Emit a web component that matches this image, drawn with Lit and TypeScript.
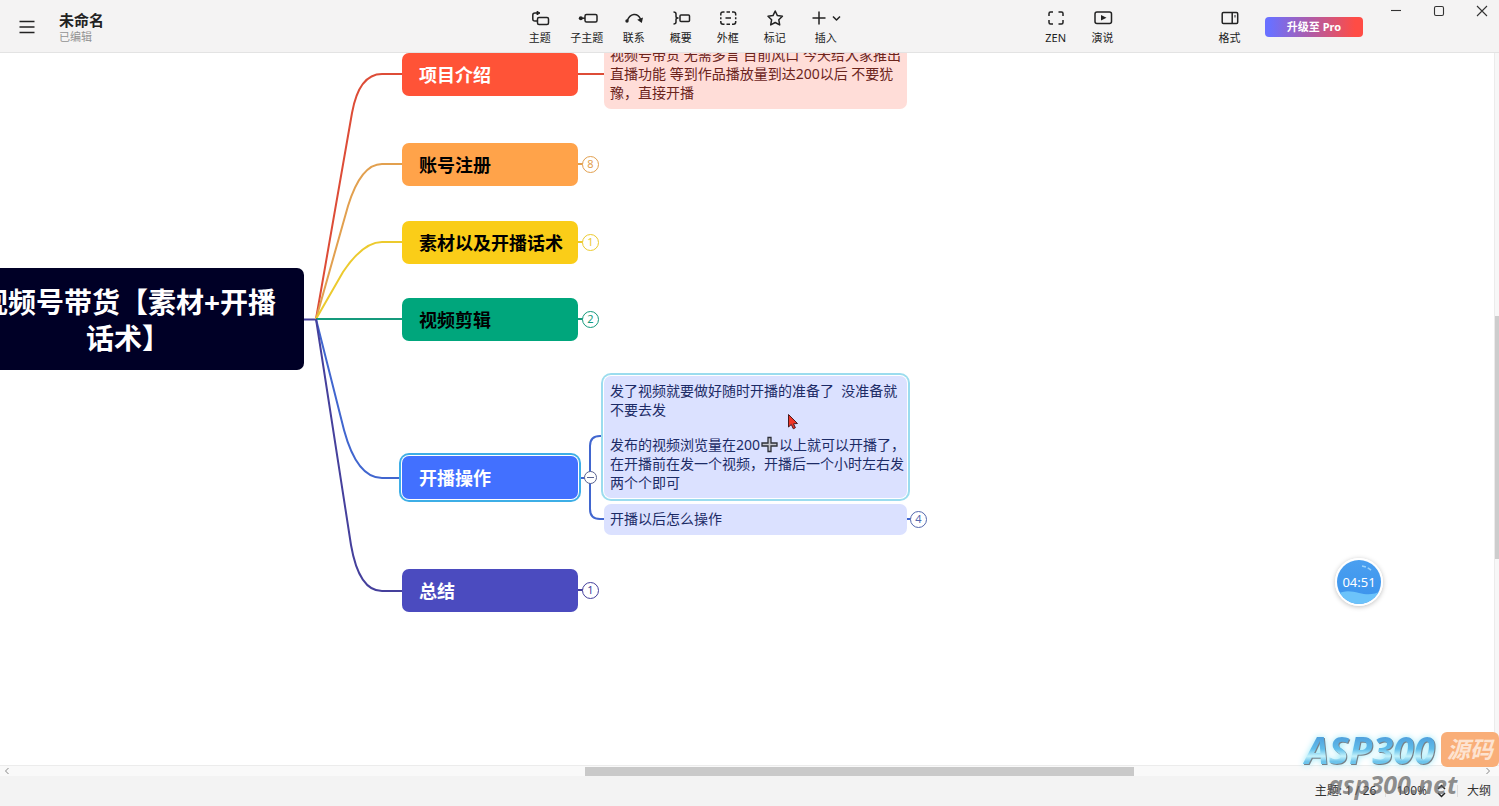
import { LitElement, html, svg, css, nothing } from "lit";
import { customElement, property, state } from "lit/decorators.js";

interface Topic {
  title: string;
  y: number;
  fill: string;
  line: string;
  ink: string;
  count?: number;
  selected?: boolean;
  branch: string;
}

/* Canvas coordinates: origin at the top left corner of the visible sheet. */
const TOPICS: Topic[] = [
  { title: "项目介绍", y: 0, fill: "#ff5337", line: "#dd4c37", ink: "#fff", branch: "M316 266L352 60Q359 21 382 21H404" },
  { title: "账号注册", y: 90, fill: "#ffa34a", line: "#e2a04f", ink: "#000", count: 8, branch: "M316 266L348 153Q361 111 382 111H404" },
  { title: "素材以及开播话术", y: 168, fill: "#facd18", line: "#ecca2e", ink: "#000", count: 1, branch: "M316 266L343 219Q363 189 382 189H404" },
  { title: "视频剪辑", y: 245, fill: "#00a67c", line: "#159a7c", ink: "#000", count: 2, branch: "M316 266H404" },
  { title: "开播操作", y: 403, fill: "#4270ff", line: "#4166cf", ink: "#fff", selected: true, branch: "M316 266L344 377Q357 425 382 425H404" },
  { title: "总结", y: 516, fill: "#4b4bbf", line: "#45409c", ink: "#fff", count: 1, branch: "M316 266L351 492Q359 538 382 538H404" },
];

const ICONS: Record<string, unknown> = {
  topic: svg`<rect x="6.500" y="8.500" width="11" height="7" rx="1.500"/><path d="M6 12H4Q1.800 12 1.800 10V6Q1.800 4 4 4H6.500"/><path d="M6 2.300L9 4L6 5.800Z" fill="currentColor" stroke-width="1"/>`,
  sub: svg`<rect x="7" y="5.500" width="12" height="7.500" rx="1.500"/><path d="M2 9.200H7"/><circle cx="2.800" cy="9.200" r="2" fill="currentColor" stroke="none"/>`,
  link: svg`<path d="M2.200 12C5 3.800 12.500 3.500 15.500 10"/><circle cx="2" cy="12" r="1.700" fill="currentColor" stroke="none"/><path d="M12.200 10.800L18 8.500L16.800 14Z" fill="currentColor" stroke="none"/>`,
  summary: svg`<path d="M1.500 3Q4 3 4 5V7.500Q4 9 6 9Q4 9 4 10.500V13Q4 15 1.500 15"/><rect x="8" y="6" width="9.500" height="6.500" rx="1"/>`,
  frame: svg`<path d="M5.500 3H4Q1.800 3 1.800 5.200V6.500M1.800 8.200V10.200M1.800 12V13Q1.800 15.200 4 15.200H5.500M7.500 3H11M7.500 15.200H11M13 3H14.500Q16.700 3 16.700 5.200V6.500M16.700 8.200V10.200M16.700 12V13Q16.700 15.200 14.500 15.200H13M6.500 9.100H12"/>`,
  star: svg`<path d="M9.200 2L11.400 6.600L16.400 7.300L12.800 10.800L13.700 15.900L9.200 13.500L4.700 15.900L5.600 10.800L2 7.300L7 6.600Z"/>`,
  zen: svg`<path d="M6 3H3.500Q2 3 2 4.500V7M2 11V13.500Q2 15 3.500 15H6M11.500 3H14.500Q16 3 16 4.500V7M16 11V13.500Q16 15 14.500 15H11.500"/>`,
  play: svg`<rect x="1" y="3" width="16.500" height="11.500" rx="2"/><path d="M7 6L12.500 8.800L7 11.500Z" fill="currentColor" stroke="none"/>`,
  format: svg`<rect x="1.200" y="3.500" width="15.500" height="11" rx="1.200"/><path d="M11.200 3.500V14.500"/><path d="M14 6V8.500" stroke-width="1"/>`,
};

const icon = (name: string) => html`<svg class="icon" viewBox="0 0 18 18" aria-hidden="true">${ICONS[name]}</svg>`;

@customElement("tool-button")
class ToolButton extends LitElement {
  @property() name = "";
  @property() label = "";

  static styles = css`
    :host { display: block; width: 47px; }
    button {
      display: flex; flex-direction: column; align-items: center; gap: 2px;
      width: 100%; padding: 0; border: 0; background: none; color: #222;
      font: 11px/18px "Noto Sans", "Noto Sans CJK SC", sans-serif;
      white-space: nowrap; cursor: pointer;
    }
    .icon { width: 18px; height: 18px; overflow: visible; fill: none; stroke: currentColor; stroke-width: 1.5; stroke-linejoin: round; }
    .wide { width: 30px; }
  `;

  render() {
    return html`<button type="button">
      ${this.name === "insert"
        ? html`<svg class="icon wide" viewBox="0 0 30 18" aria-hidden="true"><path d="M8 2.500V15.500M1.500 9H14.500M22 7.500L25.500 11L29 7.500"/></svg>`
        : icon(this.name)}
      <span>${this.label}</span>
    </button>`;
  }
}

@customElement("app-toolbar")
class AppToolbar extends LitElement {
  static styles = css`
    :host {
      display: flex; align-items: flex-start; box-sizing: border-box; height: 53px;
      background: #f4f3f3; border-bottom: 1px solid #e3e3e3;
      font-family: "Noto Sans", "Noto Sans CJK SC", sans-serif; color: #222;
    }
    button { padding: 0; border: 0; background: none; color: inherit; cursor: pointer; }
    .file { flex: 517 0 0; display: flex; min-width: 120px; }
    .menu { display: flex; width: 20px; height: 20px; margin: 17px 22px 0 17px; align-items: center; justify-content: center; }
    .menu svg { width: 16px; height: 14px; stroke: #222; stroke-width: 1.5; }
    .names { padding-top: 11px; white-space: nowrap; }
    h1 { margin: 0; font-size: 15px; line-height: 18px; font-weight: 700; }
    p { margin: 0; font-size: 11px; line-height: 16px; color: #929292; }
    .tools { display: flex; padding-top: 9px; }
    .last { margin-left: 4px; }
    .gap-a { flex: 183 0 0; }
    .gap-b { flex: 80 0 0; }
    .pro {
      width: 98px; height: 20px; margin: 17px 18px 0 12px; border-radius: 4px; color: #fff;
      background: linear-gradient(90deg, #6a70ff 5%, #b25ba4 48%, #ff4c45 92%);
      font: 700 11px/20px "Noto Sans", "Noto Sans CJK SC", sans-serif;
    }
    .window { display: flex; gap: 13px; padding-right: 2px; }
    .window button { display: flex; width: 30px; height: 22px; align-items: center; justify-content: center; }
    .window svg { width: 12px; height: 12px; fill: none; stroke: #333; stroke-width: 1.1; }
  `;

  render() {
    return html`
      <div class="file">
        <button class="menu" type="button" aria-label="菜单">
          <svg viewBox="0 0 16 14"><path d="M0.500 1.500H15.500M0.500 7H15.500M0.500 12.500H15.500" /></svg>
        </button>
        <div class="names"><h1>未命名</h1><p>已编辑</p></div>
      </div>
      <div class="tools">
        <tool-button name="topic" label="主题"></tool-button>
        <tool-button name="sub" label="子主题"></tool-button>
        <tool-button name="link" label="联系"></tool-button>
        <tool-button name="summary" label="概要"></tool-button>
        <tool-button name="frame" label="外框"></tool-button>
        <tool-button name="star" label="标记"></tool-button>
        <tool-button class="last" name="insert" label="插入"></tool-button>
      </div>
      <span class="gap-a"></span>
      <div class="tools">
        <tool-button name="zen" label="ZEN"></tool-button>
        <tool-button name="play" label="演说"></tool-button>
      </div>
      <span class="gap-b"></span>
      <div class="tools"><tool-button name="format" label="格式"></tool-button></div>
      <button class="pro" type="button">升级至 Pro</button>
      <div class="window">
        <button type="button" aria-label="最小化"><svg viewBox="0 0 12 12"><path d="M1 5.500H11" /></svg></button>
        <button type="button" aria-label="最大化"><svg viewBox="0 0 12 12"><rect x="1.500" y="1.500" width="9" height="9" rx="1.500" /></svg></button>
        <button type="button" aria-label="关闭"><svg viewBox="0 0 12 12"><path d="M1 1L11 11M11 1L1 11" /></svg></button>
      </div>
    `;
  }
}

@customElement("mind-map")
class MindMap extends LitElement {
  static styles = css`
    :host {
      display: block; position: relative; overflow: hidden; min-width: 0; background: #fff;
      font-family: "Noto Sans", "Noto Sans CJK SC", sans-serif;
    }
    .lines { position: absolute; left: 0; top: 0; width: 940px; height: 600px; fill: none; stroke-width: 2; }
    .root, .topic, .note, .badge, .pointer, .timer { position: absolute; box-sizing: border-box; }
    .root {
      left: -46px; top: 215px; width: 350px; padding: 16px 2px 14px 0; border-radius: 7px;
      background: #000026; color: #fff; text-align: center; font-size: 28px; line-height: 36px; font-weight: 700;
    }
    .topic {
      left: 402px; width: 176px; padding: 2px 17px 0; border-radius: 7px; white-space: nowrap;
      font-size: 18px; line-height: 41px; font-weight: 700;
    }
    .topic.selected { box-shadow: 0 0 0 1px #fff, 0 0 0 3px #3eaee6; }
    .badge {
      display: flex; width: 17px; height: 17px; align-items: center; justify-content: center;
      padding: 0 0 2px; border: 1px solid currentColor; border-radius: 50%; background: #fff;
      font: 11px/13px "Noto Sans", sans-serif; cursor: pointer;
    }
    .fold { width: 13px; height: 13px; padding: 0; color: #5a6390; }
    .fold::before { content: ""; width: 7px; height: 1px; background: currentColor; }
    .note {
      left: 604px; width: 303px; padding: 5px 6px 7px; border-radius: 7px; white-space: nowrap;
      font-size: 14px; line-height: 19px; background: #dbe1ff; color: #1c2b66;
    }
    .note p { margin: 0; }
    .note p + p { margin-top: 16px; }
    .intro { top: -13px; background: #ffddd8; color: #6b241c; }
    .open { top: 323px; padding-bottom: 6px; box-shadow: 0 0 0 1px #fff, 0 0 0 3px #9bdcee; }
    .after { top: 451px; }
    .plus { width: 19px; height: 17px; vertical-align: -3px; }
    .pointer { left: 787px; top: 360px; width: 12px; height: 18px; }
    .timer {
      right: 111px; top: 505px; width: 48px; height: 48px; border-radius: 50%;
      border: 2px solid #fff; box-shadow: 0 1px 5px rgba(0, 0, 0, 0.25); overflow: hidden;
      display: grid; place-items: center; color: #fff; font-size: 13px; line-height: 18px;
    }
    .timer > * { grid-area: 1 / 1; }
    .timer svg { width: 44px; height: 44px; }
  `;

  render() {
    return html`
      <svg class="lines" viewBox="0 0 940 600" aria-hidden="true">
        <path d="M303 266.500H316" stroke="#45409c" />
        ${TOPICS.map((t) => svg`<path d=${t.branch} stroke=${t.line} />`)}
        ${TOPICS.filter((t) => t.count).map((t) => svg`<path d="M578 ${t.y + 21}H583" stroke=${t.line} />`)}
        <path d="M578 21H604" stroke="#dd4c37" />
        <path d="M578 425H590M604 383H600Q590 383 590 393V456Q590 466 600 466H604M907 466H912" stroke="#4166cf" />
      </svg>
      <div class="root">视频号带货【素材+开播<br />话术】</div>
      ${TOPICS.map(
        (t) => html`
          <div class="topic ${t.selected ? "selected" : ""}" style="top:${t.y}px;background:${t.fill};color:${t.ink}">${t.title}</div>
          ${t.count
            ? html`<button class="badge" type="button" aria-label="展开${t.title}" style="left:582px;top:${t.y + 13}px;color:${t.line}">${t.count}</button>`
            : nothing}
        `
      )}
      <button class="badge fold" type="button" aria-label="收起" style="left:584px;top:418px"></button>
      <div class="note intro">视频号带货 无需多言 目前风口 今天给大家推出<br />直播功能 等到作品播放量到达200以后 不要犹<br />豫，直接开播</div>
      <div class="note open">
        <p>发了视频就要做好随时开播的准备了&nbsp; 没准备就<br />不要去发</p>
        <p>发布的视频浏览量在200<svg class="plus" viewBox="0 0 19 17" role="img" aria-label="加号"><path d="M8 1.500H11V7H17V10H11V15.500H8V10H2V7H8Z" fill="#c4c6cc" stroke="#2e3038" stroke-width="1.300" /></svg>以上就可以开播了，<br />在开播前在发一个视频，开播后一个小时左右发<br />两个个即可</p>
      </div>
      <div class="note after">开播以后怎么操作</div>
      <button class="badge" type="button" aria-label="展开开播以后怎么操作" style="left:910px;top:458px;color:#5468ae">4</button>
      <svg class="pointer" viewBox="0 0 12 18" aria-hidden="true">
        <path d="M1.500 1.500V14L4.300 11.500L6.300 15.800L8.400 14.700L6.500 10.800L10.500 10.500Z" fill="#f03526" stroke="#4a1a20" stroke-width="1" />
      </svg>
      <div class="timer">
        <svg viewBox="0 0 44 44" aria-hidden="true">
          <defs><linearGradient id="sky" x1="0" y1="0" x2="0" y2="1"><stop offset="0" stop-color="#4a9ff0" /><stop offset="1" stop-color="#3a92ec" /></linearGradient></defs>
          <rect width="44" height="44" fill="url(#sky)" />
          <path d="M0 34C8 30 14 31 22 33S37 35 44 31V44H0Z" fill="#6cc3fa" />
          <path d="M25 6Q31 7 35 11" fill="none" stroke="#9bd3fb" stroke-width="1.500" stroke-dasharray="4 2" />
        </svg>
        <span>04:51</span>
      </div>
    `;
  }
}

@customElement("app-root")
class AppRoot extends LitElement {
  @state() private zoomLevel = "100%";

  static styles = css`
    :host {
      display: grid; grid-template-rows: auto minmax(0, 1fr) auto auto; height: 100vh;
      position: relative; overflow: hidden; background: #f3f3f3; color: #222;
      font-family: "Noto Sans", "Noto Sans CJK SC", sans-serif;
    }
    .sheet { display: grid; grid-template-columns: minmax(0, 1fr) 5px; }
    .vbar { display: grid; grid-template-rows: 263fr 243fr 206fr; background: #f7f7f7; border-left: 1px solid #ebebeb; }
    .vbar i { grid-row: 2; background: #cdcdcd; }
    .hbar {
      display: grid; grid-template-columns: 14px 571fr 549fr 341fr 24px; align-items: center; height: 10px;
      background: #f9f9f9; border-top: 1px solid #ececec;
    }
    .hbar i { grid-column: 3; height: 9px; background: #c9c9c9; }
    .hbar svg { width: 6px; height: 8px; margin: 0 4px; fill: none; stroke: #888; }
    .hbar .end { grid-column: 5; margin-left: 10px; }
    .status {
      display: flex; align-items: center; justify-content: flex-end; height: 30px; padding-right: 8px;
      font-size: 12px; line-height: 18px; white-space: nowrap;
    }
    .status span, .status button { color: #333; }
    .status button { display: flex; align-items: center; padding: 0; border: 0; background: none; font: inherit; cursor: pointer; }
    .zoom { gap: 10px; margin: 0 2px 0 10px; }
    .zoom svg { width: 9px; height: 14px; fill: none; stroke: #222; stroke-width: 1.500; }
    .status hr { width: 1px; height: 12px; margin: 0 0 0 9px; border: 0; background: #ddd; }
    .status .outline { margin-left: 9px; }
    .mark { position: absolute; right: 0; bottom: 5px; width: 196px; pointer-events: none; font-style: italic; font-weight: 700; }
    .brand { display: flex; align-items: center; justify-content: space-between; height: 36px; }
    .brand b {
      padding: 0 4px 0 2px;
      font: italic 700 38px/36px "Open Sans", "Noto Sans", sans-serif;
      color: transparent; background: linear-gradient(#4f9fdc 15%, #5fbdea 50%, #c4f2fb 70%, #6cc4ec 85%);
      background-clip: text; -webkit-background-clip: text;
      filter: drop-shadow(1px 1px 0 #777f86) drop-shadow(0 0 3px #9deafa);
    }
    .brand span {
      width: 58px; flex: none; border-radius: 6px; background: #f9ae78; color: #fde3d0; text-align: center;
      font-size: 23px; line-height: 35px;
    }
    .site { padding-left: 25px; font: italic 700 25px/34px "Open Sans", "Noto Sans", sans-serif; color: rgba(95, 95, 95, 0.7); }
  `;

  render() {
    return html`
      <app-toolbar></app-toolbar>
      <div class="sheet">
        <mind-map></mind-map>
        <div class="vbar"><i></i></div>
      </div>
      <div class="hbar">
        <svg viewBox="0 0 6 8"><path d="M4.500 1L1.500 4L4.500 7" /></svg>
        <i></i>
        <svg class="end" viewBox="0 0 6 8"><path d="M1.500 1L4.500 4L1.500 7" /></svg>
      </div>
      <div class="status">
        <span>主题: 1 / 26</span>
        <hr />
        <button class="zoom" type="button">${this.zoomLevel}
          <svg viewBox="0 0 9 14"><path d="M1 5L4.500 1.500L8 5M1 9L4.500 12.500L8 9" /></svg>
        </button>
        <hr />
        <button class="outline" type="button">大纲</button>
      </div>
      <div class="mark" aria-hidden="true">
        <div class="brand"><b>ASP300</b><span>源码</span></div>
        <div class="site">asp300.net</div>
      </div>
    `;
  }
}
